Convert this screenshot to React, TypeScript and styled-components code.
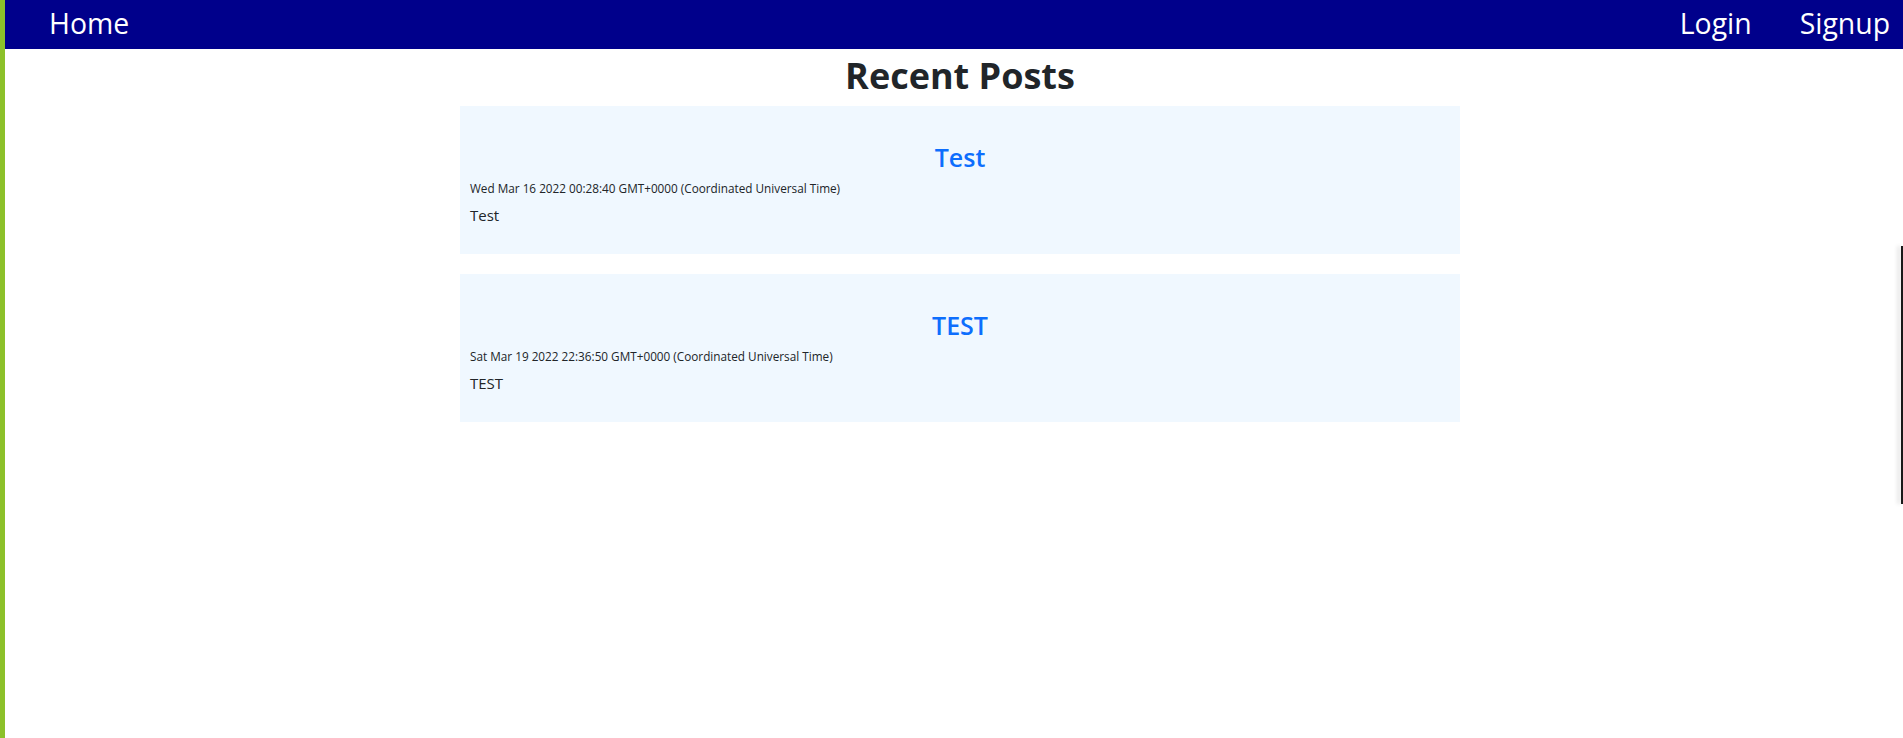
import React from "react";
import styled, { createGlobalStyle } from "styled-components";

const GlobalStyle = createGlobalStyle`
  html, body {
    margin: 0;
    padding: 0;
    overflow-x: hidden;
    background: #ffffff;
  }
  body {
    font-family: "Open Sans", "Noto Sans", "Liberation Sans", sans-serif;
    color: #212529;
  }
  * { box-sizing: border-box; }
`;

const Page = styled.div`
  box-sizing: content-box;
  width: 1910px;
  min-height: 738px;
  border-left: 5px solid #8cc12a;
  display: flex;
  flex-direction: column;
`;

const NavBar = styled.nav`
  height: 49px;
  background: #00008b;
  display: flex;
  align-items: center;
  justify-content: space-between;
  padding: 0 25px 0 44px;
`;

const NavGroup = styled.div`
  display: flex;
  align-items: center;
  gap: 48px;
`;

const NavLink = styled.a`
  color: #ffffff;
  font-size: 28.4px;
  line-height: 1;
  text-decoration: none;
  padding-bottom: 2px;
  cursor: pointer;
`;

const Main = styled.main`
  display: flex;
  flex-direction: column;
  align-items: center;
`;

const Heading = styled.h1`
  margin: 5px 0 0;
  font-size: 36px;
  font-weight: 700;
  line-height: 1.2;
  color: #212529;
`;

const PostList = styled.div`
  width: 1000px;
  margin-top: 9px;
  display: flex;
  flex-direction: column;
  gap: 20px;
`;

const Card = styled.article`
  background: #f0f8ff;
  height: 148px;
  padding: 34px 10px 0;
  display: flex;
  flex-direction: column;
`;

const PostTitle = styled.h3`
  margin: 0;
  text-align: center;
  color: #0d6efd;
  font-size: 25px;
  font-weight: 600;
  line-height: 34px;
`;

const PostDate = styled.small`
  display: block;
  margin-top: 5px;
  font-size: 11.75px;
  line-height: 19px;
  color: #212529;
`;

const PostBody = styled.p`
  margin: 5px 0 0;
  font-size: 15px;
  line-height: 24px;
  color: #212529;
`;

const EdgeHandle = styled.div`
  position: fixed;
  top: 246px;
  right: 0;
  width: 2px;
  height: 258px;
  background: #1a1a1a;
  box-shadow: -3px 0 4px rgba(0, 0, 0, 0.18);
`;

type Post = { title: string; date: string; body: string };

const posts: Post[] = [
  {
    title: "Test",
    date: "Wed Mar 16 2022 00:28:40 GMT+0000 (Coordinated Universal Time)",
    body: "Test",
  },
  {
    title: "TEST",
    date: "Sat Mar 19 2022 22:36:50 GMT+0000 (Coordinated Universal Time)",
    body: "TEST",
  },
];

export default function App() {
  return (
    <>
      <GlobalStyle />
      <Page>
        <NavBar>
          <NavGroup>
            <NavLink>Home</NavLink>
          </NavGroup>
          <NavGroup>
            <NavLink>Login</NavLink>
            <NavLink>Signup</NavLink>
          </NavGroup>
        </NavBar>
        <Main>
          <Heading>Recent Posts</Heading>
          <PostList>
            {posts.map((p) => (
              <Card key={p.date}>
                <PostTitle>{p.title}</PostTitle>
                <PostDate>{p.date}</PostDate>
                <PostBody>{p.body}</PostBody>
              </Card>
            ))}
          </PostList>
        </Main>
      </Page>
      <EdgeHandle />
    </>
  );
}
